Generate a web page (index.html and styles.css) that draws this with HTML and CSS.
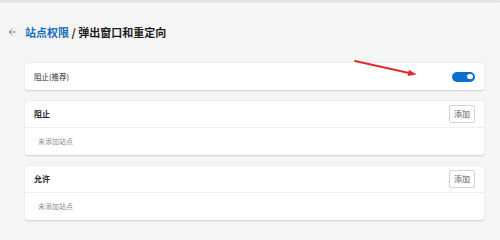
FILE: index.html
```html
<!DOCTYPE html>
<html lang="zh-CN">
<head>
<meta charset="utf-8">
<title>弹出窗口和重定向</title>
<link rel="stylesheet" href="styles.css">
</head>
<body>
<div class="topbar"></div>
<div class="header">
  <svg class="back" width="9" height="8" viewBox="0 0 9 8"><path d="M8.5 4H1M4.5 0.6L1 4l3.5 3.4" fill="none" stroke="#6f93c4" stroke-width="1"/></svg>
  <h1 class="title"><span class="crumb-link">站点权限</span> / 弹出窗口和重定向</h1>
</div>
<div class="content">
  <div class="card">
    <div class="row">
      <span class="label">阻止(推荐)</span>
      <span class="toggle"><span class="knob"></span></span>
    </div>
  </div>
  <div class="card">
    <div class="row row-head">
      <span class="section">阻止</span>
      <button class="btn">添加</button>
    </div>
    <div class="empty">未添加站点</div>
  </div>
  <div class="card">
    <div class="row row-head">
      <span class="section">允许</span>
      <button class="btn">添加</button>
    </div>
    <div class="empty">未添加站点</div>
  </div>
</div>
<svg class="annotation" width="500" height="233" viewBox="0 0 500 233">
  <line x1="355" y1="61" x2="409" y2="73" stroke="#e02b2b" stroke-width="1.8" stroke-linecap="round"/>
  <polygon points="416.5,74.6 407.6,76 408.9,69.8" fill="#e02b2b"/>
</svg>
</body>
</html>
```

FILE: styles.css
```css
html, body {
  margin: 0;
  padding: 0;
}
body {
  background: #f5f5f5;
  font-family: "Noto Sans CJK SC", "Noto Sans", sans-serif;
  color: #1f1f1f;
  width: 500px;
  height: 233px;
  overflow: hidden;
  position: relative;
}
.topbar {
  height: 2px;
  background: #e3e3e3;
  box-shadow: 0 1px 2px rgba(0, 0, 0, 0.05);
}
.header {
  display: flex;
  align-items: center;
  height: 20px;
  margin-top: 20px;
  padding-left: 8px;
}
.back {
  display: block;
  margin-right: 8px;
}
.title {
  margin: 0;
  font-size: 11px;
  line-height: 20px;
  font-weight: 700;
  color: #1c1c1c;
}
.crumb-link {
  color: #1a6dc2;
}
.content {
  padding: 0 16px 0 25px;
  margin-top: 21px;
}
.card {
  background: #fff;
  border-radius: 3px;
  box-shadow: 0 0.5px 1.5px rgba(0, 0, 0, 0.16);
}
.card + .card {
  margin-top: 11px;
}
.row {
  display: flex;
  align-items: center;
  justify-content: space-between;
  height: 27px;
  padding: 0 9px 0 9px;
}
.row-head {
  height: 26px;
  border-bottom: 1px solid #efefef;
}
.label {
  font-size: 7.5px;
  line-height: 10px;
  color: #262626;
}
.section {
  font-size: 8px;
  line-height: 10px;
  font-weight: 700;
  color: #262626;
}
.toggle {
  width: 23px;
  height: 10px;
  border-radius: 5px;
  background: #0b6fd1;
  display: flex;
  align-items: center;
  justify-content: flex-end;
  padding-right: 2.5px;
  box-sizing: border-box;
}
.knob {
  width: 5.5px;
  height: 5.5px;
  border-radius: 50%;
  background: #fff;
}
.btn {
  width: 26px;
  height: 18px;
  padding: 0;
  border: 1px solid #d3d3d3;
  border-radius: 2px;
  background: #fff;
  font-family: inherit;
  font-size: 8px;
  line-height: 16px;
  color: #555;
}
.empty {
  height: 27px;
  line-height: 27px;
  padding-left: 13px;
  font-size: 7px;
  color: #8a8a8a;
}
.annotation {
  position: absolute;
  left: 0;
  top: 0;
  pointer-events: none;
}
```
